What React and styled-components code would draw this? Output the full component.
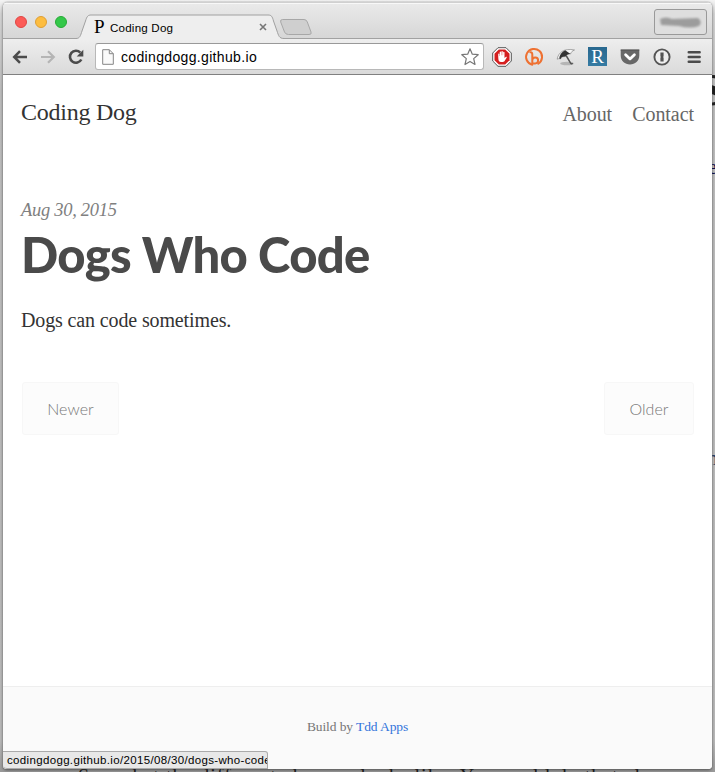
import React from "react";
import styled, { createGlobalStyle } from "styled-components";

const GlobalStyle = createGlobalStyle`
  * { box-sizing: border-box; }
  body { margin: 0; overflow: hidden; }
`;

const slab = `"Liberation Serif", "Noto Serif", serif`;
const ui = `"Liberation Sans", Arial, sans-serif`;

const Desktop = styled.div`
  position: relative;
  width: 715px;
  height: 772px;
  overflow: hidden;
  padding: 2px 3px 3px;
  background: linear-gradient(180deg, #f4f4f4 0, #d5d5d5 14px, #bdbdbd 90px, #b9b9b9 740px, #999 772px);
`;

const Peek = styled.div`
  position: absolute;
  left: ${(p) => p.$x}px;
  top: ${(p) => p.$y}px;
  font: ${(p) => p.$weight || 400} ${(p) => p.$size}px/1 ${slab};
  letter-spacing: ${(p) => p.$spacing || 0}px;
  color: ${(p) => p.$color || "#202020"};
  white-space: nowrap;
`;

const Window = styled.div`
  position: relative;
  display: flex;
  flex-direction: column;
  width: 709px;
  height: 767px;
  overflow: hidden;
  background: #fff;
  border-radius: 5px 5px 4px 4px;
  box-shadow: 0 0 1px #777, 0 1px 3px rgba(0, 0, 0, 0.5);
`;

const TabStrip = styled.div`
  display: flex;
  flex: 0 0 37px;
  background: linear-gradient(#eaeaea, #d6d6d6);
  border-top: 1px solid #d0d0d0;
  box-shadow: inset 0 -1px #a2a2a2, inset 0 1px #f8f8f8;
`;

const Lights = styled.div`
  display: flex;
  gap: 8px;
  padding: 13px 0 0 12px;
  width: 73px;
`;

const Light = styled.span`
  width: 12px;
  height: 12px;
  border-radius: 50%;
  background: ${(p) => p.$fill};
  border: 1px solid ${(p) => p.$edge};
`;

const Tab = styled.div`
  position: relative;
  display: flex;
  align-items: center;
  width: 208px;
  height: 36px;
  padding: 12px 18px 0 18px;
  font: 11.6px ${ui};
  color: #000;
`;

const TabShape = styled.svg`
  position: absolute;
  left: 0;
  top: 0;
`;

const Favicon = styled.span`
  position: relative;
  width: 16px;
  font: 19px/18px ${slab};
  margin-top: -1px;
`;

const TabTitle = styled.span`
  position: relative;
  flex: 1;
  letter-spacing: 0.2px;
`;

const CloseIcon = styled.svg`
  position: relative;
  margin-right: -1px;
`;

const NewTab = styled.svg`
  margin: 15px 0 0 -5px;
`;

const Profile = styled.div`
  display: flex;
  align-items: center;
  justify-content: center;
  width: 53px;
  height: 26px;
  margin: 6px 5px 0 auto;
  border: 1px solid #999;
  border-radius: 3px;
  background: #dedede;
`;

const Toolbar = styled.div`
  display: flex;
  align-items: center;
  flex: 0 0 36px;
  padding: 0 8px 0 9px;
  background: linear-gradient(#eeeeee, #dadada);
  border-bottom: 1px solid #808080;
`;

const NavIcons = styled.div`
  display: flex;
  gap: 12px;
  width: 83px;
`;

const AddressBar = styled.div`
  display: flex;
  align-items: center;
  width: 389px;
  height: 27px;
  padding: 0 3px 0 6px;
  border: 1px solid #b8b8b8;
  border-top-color: #999;
  border-radius: 3px;
  background: #fff;
`;

const Url = styled.span`
  flex: 1;
  padding-left: 7px;
  font: 14px ${ui};
  letter-spacing: 0.34px;
  color: #000;
`;

const Extensions = styled.div`
  display: flex;
  align-items: center;
  gap: 12px;
  margin-left: 8px;
`;

const Page = styled.div`
  display: flex;
  flex-direction: column;
  flex: 1;
`;

const SiteHeader = styled.header`
  display: flex;
  justify-content: space-between;
  align-items: center;
  height: 76px;
  padding: 0 18px 0 18px;
  font-family: ${slab};
`;

const SiteName = styled.a`
  font-size: 24px;
  letter-spacing: -0.25px;
  margin-top: -2px;
  color: #333;
`;

const SiteNav = styled.nav`
  display: flex;
  gap: 20px;
  padding-top: 2px;
  font-size: 20px;
  letter-spacing: -0.05px;
  color: #666;
`;

const Article = styled.article`
  padding: 46px 18px 0;
`;

const DateLine = styled.time`
  display: block;
  font: italic 18.5px/26px ${slab};
  letter-spacing: -0.3px;
  color: #808080;
`;

const Title = styled.h1`
  margin: 1px 0 0;
  font: 900 49px/60px Lato, sans-serif;
  letter-spacing: -0.7px;
  color: #4a4a4a;
  white-space: nowrap;
`;

const Body = styled.p`
  margin: 21px 0 0;
  font: 20px/30px ${slab};
  letter-spacing: -0.13px;
  color: #333;
`;

const Pager = styled.div`
  display: flex;
  justify-content: space-between;
  margin: 47px 18px 0 19px;
`;

const PagerButton = styled.a`
  display: flex;
  align-items: center;
  justify-content: center;
  width: ${(p) => p.$width}px;
  height: 53px;
  border: 1px solid #f7f7f7;
  border-radius: 3px;
  background: #fcfcfc;
  font: 300 16px Lato, sans-serif;
  letter-spacing: 0.05px;
  color: #777;
`;

const Footer = styled.footer`
  height: 83px;
  margin-top: auto;
  border-top: 1px solid #eee;
  background: #fafafa;
  text-align: center;
  font: 13.5px/80px ${slab};
  letter-spacing: -0.1px;
  color: #777;
`;

const FooterLink = styled.a`
  color: #3374db;
`;

const StatusBar = styled.div`
  position: absolute;
  left: 0;
  bottom: 0;
  width: 265px;
  height: 18px;
  padding-left: 4px;
  overflow: hidden;
  white-space: nowrap;
  background: #e8e8e8;
  border: solid #aaa;
  border-width: 1px 1px 1px 0;
  border-radius: 0 3px 0 4px;
  font: 11.5px/17px ${ui};
  letter-spacing: 0.34px;
  color: #000;
`;

const BackIcon = ({ color }) => (
  <svg width="16" height="16" viewBox="0 0 16 16">
    <path d="M15 8H3M8 2.200L2.200 8L8 13.800" fill="none" stroke={color} strokeWidth="2.5" />
  </svg>
);

const ForwardIcon = ({ color }) => (
  <svg width="16" height="16" viewBox="0 0 16 16">
    <path d="M1 8h12M8 2.200L13.800 8L8 13.800" fill="none" stroke={color} strokeWidth="2.2" />
  </svg>
);

const ReloadIcon = () => (
  <svg width="16" height="16" viewBox="0 0 16 16">
    <path d="M12.300 3.600A6 6 0 1 0 13.300 10.500" fill="none" stroke="#4c4c4c" strokeWidth="2.6" />
    <path d="M15.300.8v6.600H8.700z" fill="#4c4c4c" />
  </svg>
);

const PageIcon = () => (
  <svg width="12" height="16" viewBox="0 0 12 16">
    <path d="M.7.7h6.600l4 4v10.600H.7z" fill="#fafafa" stroke="#858585" />
    <path d="M7.300.7v4h4" fill="none" stroke="#858585" />
  </svg>
);

const StarIcon = () => (
  <svg width="20" height="20" viewBox="0 0 20 20">
    <path d="M10 1.800L12.300 7.200 18.200 7.700 13.700 11.600 15 17.500 10 14.400 5 17.500 6.300 11.600 1.800 7.700 7.700 7.200z" fill="#fff" stroke="#777" strokeWidth="1.2" strokeLinejoin="round" />
  </svg>
);

const BlockIcon = () => (
  <svg width="20" height="20" viewBox="0 0 20 20">
    <path d="M6 .7h8L19.300 6v8L14 19.300H6L.7 14V6z" fill="#fff" stroke="#555" strokeWidth="1" />
    <path d="M6.800 2.500h6.400l4.300 4.300v6.400l-4.300 4.300H6.800l-4.300-4.300V6.800z" fill="#d51f1f" />
    <path d="M6.200 7.100c0-.9 1.200-.9 1.200 0V9h.3V5.300c0-1 1.400-1 1.400 0v3h.3V4.700c0-1 1.400-1 1.400 0v3.600h.3V5.400c0-1 1.400-1 1.400 0V11l1.200-1c.8-.5 1.500.1.900.8l-2 3.200c-.7 1.200-4.700 1.500-5.700 0-.6-.9-.7-3.600-.7-6.900z" fill="#fff" />
  </svg>
);

const BitlyIcon = () => (
  <svg width="20" height="20" viewBox="0 0 20 20">
    <path d="M8.300 17.700A8 8 0 1 1 14.300 16.700" fill="none" stroke="#ee7132" strokeWidth="2" strokeLinecap="round" />
    <path d="M6.300 5.300C8 5.200 8.300 6 8.300 7.600V16.400H11.200A2.900 2.900 0 1 0 8.300 13.300" fill="none" stroke="#ee7132" strokeWidth="2" strokeLinecap="round" />
  </svg>
);

const UmbrellaIcon = () => (
  <svg width="20" height="20" viewBox="0 0 20 20">
    <ellipse cx="11" cy="16.500" rx="6.800" ry="1.700" fill="#b5b5b5" />
    <path d="M9.500 7.500L14.300 15.700Q15.300 17.600 16.700 16.300" fill="none" stroke="#555" strokeWidth="1.5" />
    <path d="M1.200 12.200C2 6 8 .7 18.500 3C16.300 3.800 15.200 5 14.500 7C12.200 6.500 10.500 7.800 9.300 9.600C7 9.300 5.400 10.100 4.600 11.900C3.300 11.500 2.200 11.600 1.200 12.200z" fill="#f7f7f7" stroke="#777" strokeWidth=".6" />
    <path d="M3.200 11.500C3.500 8 5.500 5 9.200 3.200L14.500 7C12.200 6.500 10.500 7.800 9.300 9.600C7 9.300 5.400 10.100 4.600 11.900z" fill="#343434" />
  </svg>
);

const RSquare = styled.span`
  width: 19px;
  height: 19px;
  margin: 0 1px 0 0;
  background: linear-gradient(#28688f, #367ba3);
  color: #fff;
  font: 19px/19px ${slab};
  text-align: center;
`;

const PocketIcon = () => (
  <svg width="20" height="20" viewBox="0 0 20 20">
    <path d="M.7 2.700h18.600v5.700c0 5.400-4.200 9-9.300 9s-9.300-3.600-9.300-9z" fill="#686868" />
    <path d="M.7 3h18.600" stroke="#505050" />
    <path d="M5.600 7.700L10 11.900l4.400-4.200" fill="none" stroke="#fff" strokeWidth="2.8" strokeLinecap="round" strokeLinejoin="round" />
  </svg>
);

const KeyholeIcon = () => (
  <svg width="20" height="20" viewBox="0 0 20 20">
    <circle cx="10" cy="10" r="7.6" fill="#eee" stroke="#555" strokeWidth="1.9" />
    <path d="M8.400 5.500h3.200v3.900l-.7.6.7.6v3.900H8.400v-3.900l.7-.6-.7-.6z" fill="#555" />
  </svg>
);

const MenuIcon = () => (
  <svg width="20" height="20" viewBox="0 0 20 20">
    <path d="M4.800 5.200h10.800M4.800 10h10.800M4.800 14.800h10.800" stroke="#4b4b4b" strokeWidth="2.6" strokeLinecap="round" />
  </svg>
);

export default function App() {
  return (
    <Desktop>
      <GlobalStyle />
      <Peek $x={700} $y={52} $size={64} $weight={700}>s</Peek>
      <Peek $x={708} $y={157} $size={20} $color="#101050">e</Peek>
      <Peek $x={707} $y={447} $size={22} $color="#25406a">n</Peek>
      <Peek $x={78} $y={766} $size={20} $spacing={1}>
        Say what the different changes looks like. You could do that also
      </Peek>
      <Window>
        <TabStrip>
          <Lights>
            <Light $fill="#fc5b57" $edge="#df4744" />
            <Light $fill="#fdbd40" $edge="#de9f35" />
            <Light $fill="#34c84a" $edge="#27aa35" />
          </Lights>
          <Tab>
            <TabShape width="208" height="36" viewBox="0 0 208 36">
              <path d="M0 36V35.500C4 35.500 4.500 32.500 6 28L9.500 18C10.800 13.500 12 12 15 12H192C195.500 12 196.300 13.500 197.500 18L201 28C202.600 32.500 203 35.500 208 35.500V36z" fill="#eeeeee" />
              <path d="M0 35.500C4 35.500 4.500 32.500 6 28L9.500 18C10.800 13.500 12 12 15 12H192C195.500 12 196.300 13.500 197.500 18L201 28C202.600 32.500 203 35.500 208 35.500" fill="none" stroke="#a0a0a0" />
            </TabShape>
            <Favicon>P</Favicon>
            <TabTitle>Coding Dog</TabTitle>
            <CloseIcon width="8" height="8" viewBox="0 0 8 8">
              <path d="M1 1l6 6M7 1L1 7" stroke="#777" strokeWidth="1.6" />
            </CloseIcon>
          </Tab>
          <NewTab width="34" height="18" viewBox="0 0 34 18">
            <path d="M3.500 1.500H25Q27.500 1.500 28.300 4L32 14Q33 16.500 30 16.500H9.500Q6.500 16.500 5.500 14L1.700 4Q1 1.500 3.500 1.500z" fill="#cfcfcf" stroke="#a7a7a7" />
          </NewTab>
          <Profile>
            <svg width="45" height="16" viewBox="0 0 45 16">
              <defs>
                <filter id="smudge"><feGaussianBlur stdDeviation="1" /></filter>
              </defs>
              <path d="M2 5Q8 2 14 5L40 4Q45 8 41 12Q32 15 21 12L3 11z" fill="#9c9c9c" filter="url(#smudge)" />
            </svg>
          </Profile>
        </TabStrip>
        <Toolbar>
          <NavIcons>
            <BackIcon color="#4c4c4c" />
            <ForwardIcon color="#b5b5b5" />
            <ReloadIcon />
          </NavIcons>
          <AddressBar>
            <PageIcon />
            <Url>codingdogg.github.io</Url>
            <StarIcon />
          </AddressBar>
          <Extensions>
            <BlockIcon />
            <BitlyIcon />
            <UmbrellaIcon />
            <RSquare>R</RSquare>
            <PocketIcon />
            <KeyholeIcon />
            <MenuIcon />
          </Extensions>
        </Toolbar>
        <Page>
          <SiteHeader>
            <SiteName>Coding Dog</SiteName>
            <SiteNav>
              <a>About</a>
              <a>Contact</a>
            </SiteNav>
          </SiteHeader>
          <Article>
            <DateLine>Aug 30, 2015</DateLine>
            <Title>Dogs Who Code</Title>
            <Body>Dogs can code sometimes.</Body>
          </Article>
          <Pager>
            <PagerButton $width={97}>Newer</PagerButton>
            <PagerButton $width={90}>Older</PagerButton>
          </Pager>
          <Footer>
            Build by <FooterLink>Tdd Apps</FooterLink>
          </Footer>
        </Page>
        <StatusBar>codingdogg.github.io/2015/08/30/dogs-who-code</StatusBar>
      </Window>
    </Desktop>
  );
}
